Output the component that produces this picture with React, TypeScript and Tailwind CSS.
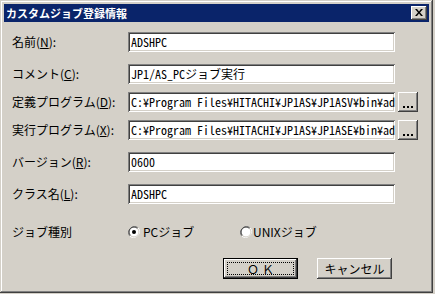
import React from "react";

const ui = "font-['Noto_Sans_CJK_JP','Noto_Sans',sans-serif]";
const mono = "font-['Noto_Sans_Mono_CJK_JP','DejaVu_Sans_Mono',monospace]";

function Label({ text, mn }: { text: string; mn: string }) {
  return (
    <div className={`w-[116px] shrink-0 text-[12px] leading-[14px] text-black ${ui}`}>
      {text}(<span className="underline underline-offset-1">{mn}</span>):
    </div>
  );
}

function Field({ value }: { value: string }) {
  return (
    <div className="w-[267px] h-[20px] shrink-0 bg-white shadow-[inset_1px_1px_0_#808080,inset_-1px_-1px_0_#ffffff,inset_2px_2px_0_#404040,inset_-2px_-2px_0_#d4d0c8] pl-[3px] pr-[3px] overflow-hidden flex items-center">
      <span className={`whitespace-nowrap text-[12px] leading-[14px] text-black ${mono}`}>{value}</span>
    </div>
  );
}

function Browse() {
  return (
    <div className="ml-[3px] w-[20px] h-[20px] shrink-0 bg-[#d4d0c8] shadow-[inset_-1px_-1px_0_#404040,inset_1px_1px_0_#ffffff,inset_-2px_-2px_0_#808080,inset_2px_2px_0_#d4d0c8] flex items-end justify-center pb-[4px]">
      <div className="flex gap-[2px]">
        <div className="w-[2px] h-[2px] bg-black" />
        <div className="w-[2px] h-[2px] bg-black" />
        <div className="w-[2px] h-[2px] bg-black" />
      </div>
    </div>
  );
}

function Row({ label, mn, value, browse, cls }: { label: string; mn: string; value: string; browse?: boolean; cls: string }) {
  return (
    <div className={`flex items-center ${cls}`}>
      <Label text={label} mn={mn} />
      <Field value={value} />
      {browse ? <Browse /> : null}
    </div>
  );
}

function Radio({ checked }: { checked: boolean }) {
  return (
    <svg width="12" height="12" viewBox="0 0 12 12" className="shrink-0">
      <circle cx="6" cy="6" r="5" fill="#ffffff" />
      <path d="M1.8 10.2 A6 6 0 0 1 10.2 1.8" fill="none" stroke="#808080" strokeWidth="1" />
      <path d="M1.8 10.2 A6 6 0 0 0 10.2 1.8" fill="none" stroke="#ffffff" strokeWidth="1" />
      <path d="M2.5 9.5 A4.9 4.9 0 0 1 9.5 2.5" fill="none" stroke="#404040" strokeWidth="1" />
      <path d="M2.5 9.5 A4.9 4.9 0 0 0 9.5 2.5" fill="none" stroke="#d4d0c8" strokeWidth="1" />
      {checked ? <circle cx="6" cy="6" r="2" fill="#000000" /> : null}
    </svg>
  );
}

export default function App() {
  return (
    <div className="w-[435px] h-[294px] bg-[#d4d0c8] overflow-hidden">
      <div className="w-[433px] h-[293px] bg-[#d4d0c8] p-[4px] shadow-[inset_-1px_-1px_0_#404040,inset_1px_1px_0_#d4d0c8,inset_-2px_-2px_0_#808080,inset_2px_2px_0_#ffffff] flex flex-col">
        <div className="h-[18px] bg-[#0a246a] flex items-center justify-between pl-[2px] pr-[2px]">
          <span className={`text-white font-bold text-[11px] leading-[12px] ${ui}`}>カスタムジョブ登録情報</span>
          <div className="w-[16px] h-[14px] bg-[#d4d0c8] shadow-[inset_-1px_-1px_0_#404040,inset_1px_1px_0_#ffffff,inset_-2px_-2px_0_#808080,inset_2px_2px_0_#d4d0c8] flex items-center justify-center">
            <svg width="8" height="7" viewBox="0 0 8 7" className="ml-[-1px] mt-[-1px]">
              <path d="M0 0h2l2 2.5L6 0h2L5 3.5 8 7H6L4 4.5 2 7H0l3-3.5z" fill="#000" />
            </svg>
          </div>
        </div>
        <div className="flex flex-col pl-[8px] pt-[10px]">
          <Row cls="" label="名前" mn="N" value="ADSHPC" />
          <Row cls="mt-[12px]" label="コメント" mn="C" value="JP1/AS_PCジョブ実行" />
          <Row cls="mt-[8px]" label="定義プログラム" mn="D" value="C:¥Program Files¥HITACHI¥JP1AS¥JP1ASV¥bin¥adshpc.exe" browse />
          <Row cls="mt-[8px]" label="実行プログラム" mn="X" value="C:¥Program Files¥HITACHI¥JP1AS¥JP1ASE¥bin¥adshpc.exe" browse />
          <Row cls="mt-[12px]" label="バージョン" mn="R" value="0600" />
          <Row cls="mt-[12px]" label="クラス名" mn="L" value="ADSHPC" />
          <div className={`flex items-center mt-[18px] h-[20px] text-[12px] leading-[14px] text-black ${ui}`}>
            <div className="w-[116px] shrink-0">ジョブ種別</div>
            <div className="flex items-center w-[112px]">
              <Radio checked />
              <span className="ml-[3px]">PCジョブ</span>
            </div>
            <div className="flex items-center">
              <Radio checked={false} />
              <span className="ml-[1px]">UNIXジョブ</span>
            </div>
          </div>
          <div className={`flex mt-[16px] pl-[211px] gap-[19px] text-[12px] text-black ${ui}`}>
            <div className="w-[75px] h-[21px] border border-black bg-[#d4d0c8] shadow-[inset_-1px_-1px_0_#404040,inset_1px_1px_0_#ffffff,inset_-2px_-2px_0_#808080,inset_2px_2px_0_#d4d0c8] p-[3px]">
              <div className="w-full h-full border border-dotted border-black flex items-center justify-center leading-[12px]">
                <span className="tracking-[3px] pl-[3px]">ＯＫ</span>
              </div>
            </div>
            <div className="w-[75px] h-[21px] bg-[#d4d0c8] shadow-[inset_-1px_-1px_0_#404040,inset_1px_1px_0_#ffffff,inset_-2px_-2px_0_#808080,inset_2px_2px_0_#d4d0c8] flex items-center justify-center leading-[12px]">
              キャンセル
            </div>
          </div>
        </div>
      </div>
    </div>
  );
}
